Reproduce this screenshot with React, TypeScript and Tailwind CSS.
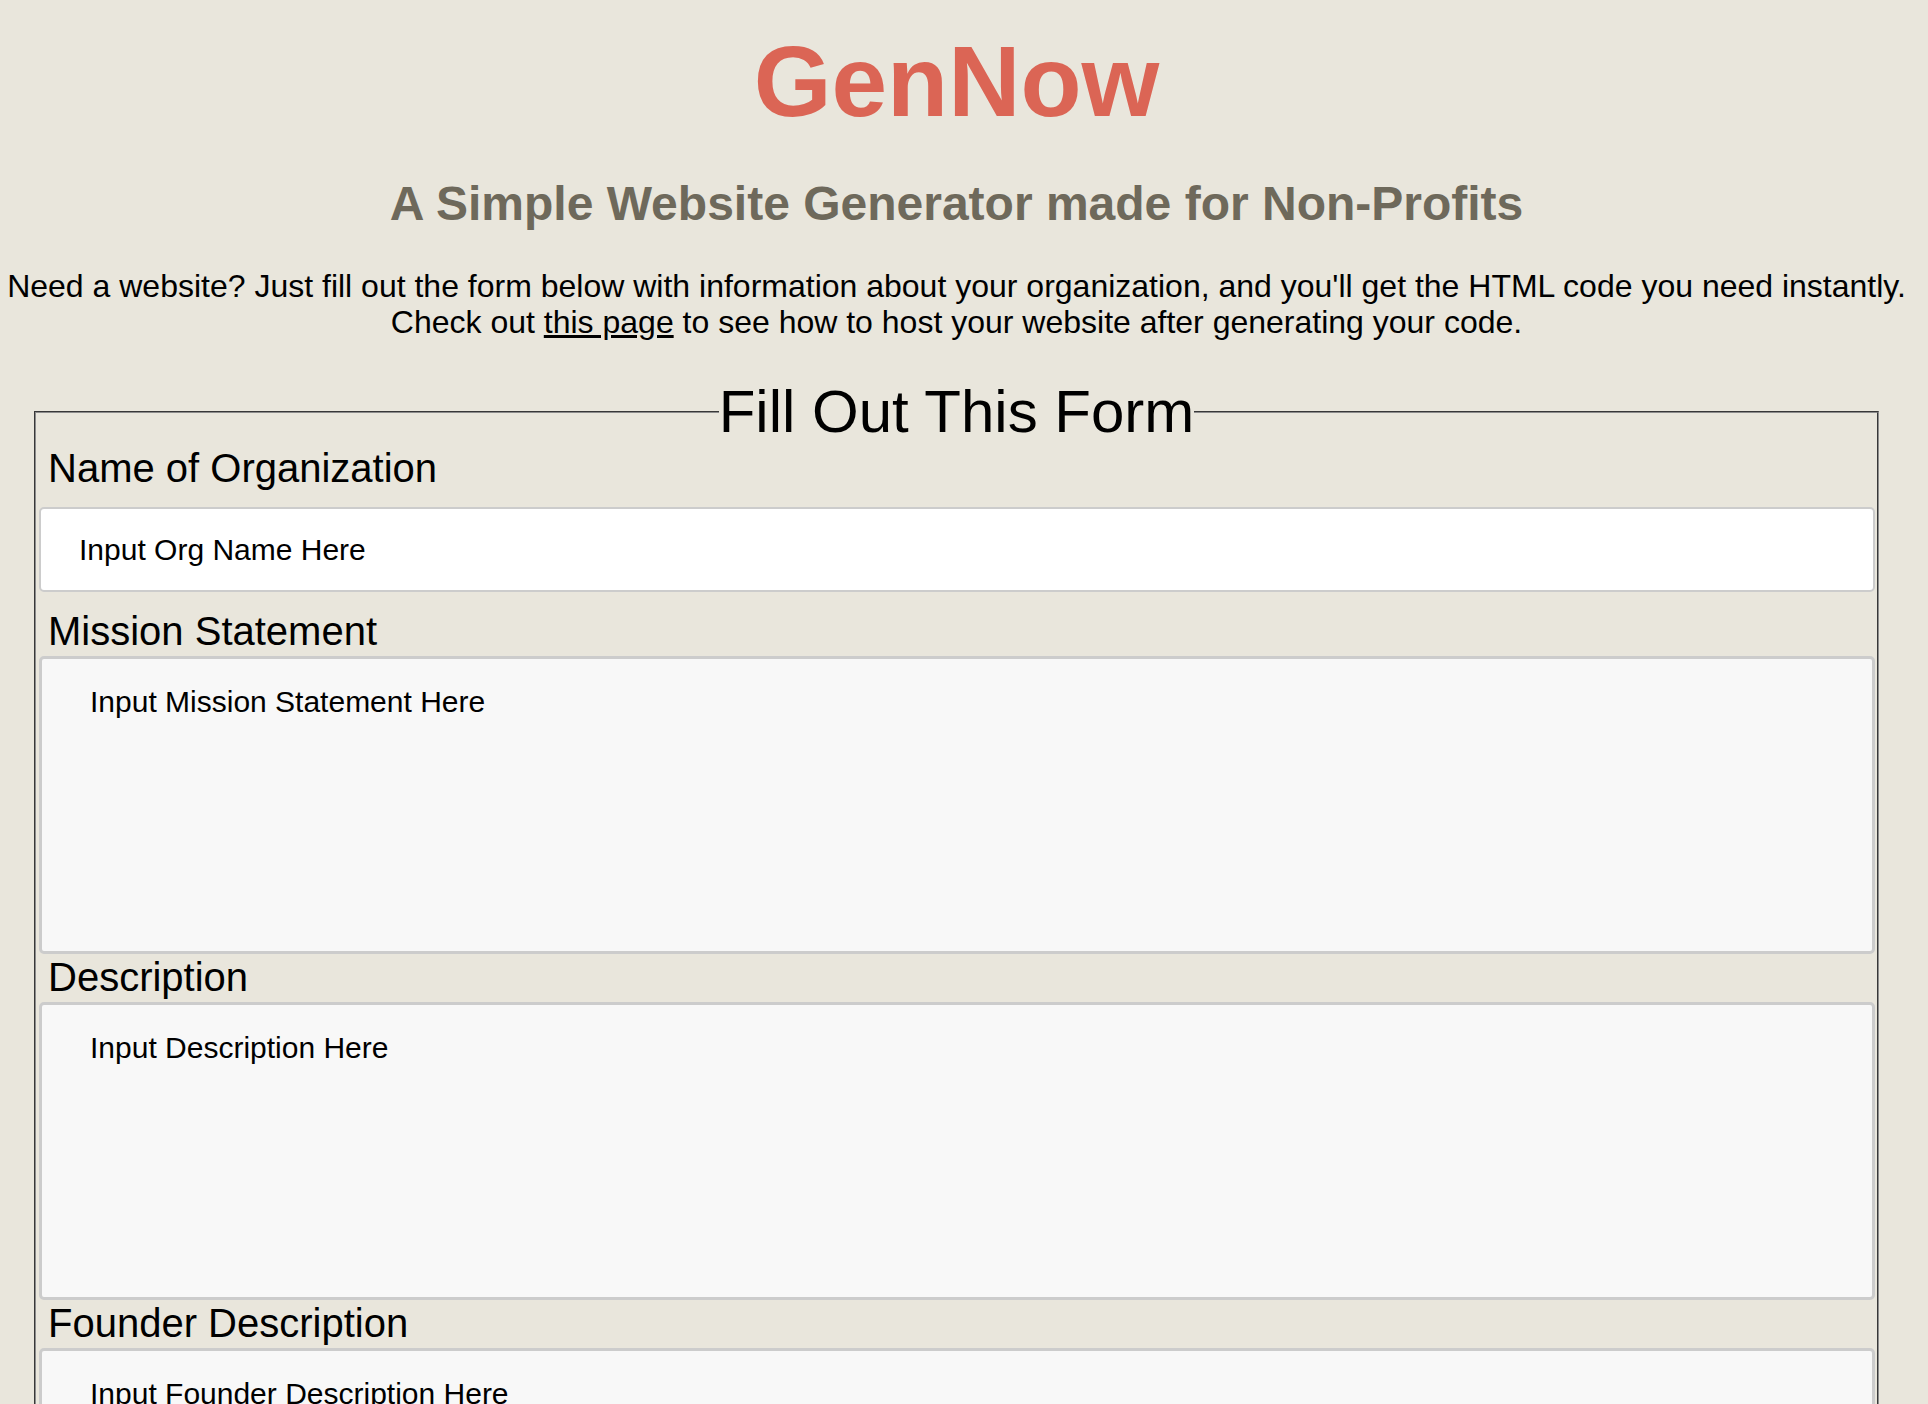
import React from "react"

const fields = [
  { label: "Mission Statement", placeholder: "Input Mission Statement Here" },
  { label: "Description", placeholder: "Input Description Here" },
  { label: "Founder Description", placeholder: "Input Founder Description Here" },
  { label: "Contact Information", placeholder: "Input Contact Information Here" },
]

export default function App() {
  return (
    <div className="h-screen overflow-hidden bg-[#e9e6dc] font-['Liberation_Sans',Arial,sans-serif] text-black">
      <div className="w-[1913px] pt-[24px]">
        <h1 className="text-center text-[100px] leading-[115px] font-bold text-[#db6555]">GenNow</h1>
        <h2 className="mt-[37px] text-center text-[48px] leading-[55px] font-bold text-[#6e695b]">
          A Simple Website Generator made for Non-Profits
        </h2>
        <p className="mt-[37px] text-center text-[32px] leading-[36px] whitespace-nowrap">
          Need a website? Just fill out the form below with information about your organization, and you'll get the HTML code you need instantly.
          <br />
          Check out{" "}
          <a href="#" className="underline">
            this page
          </a>{" "}
          to see how to host your website after generating your code.
        </p>

        <form className="mt-[37px]">
          <fieldset className="mx-[34px] [border:2px_groove_#8c8c8c]">
            <legend {...{ align: "center" }} className="mx-auto px-0 text-[60px] leading-[69px]">
              Fill Out This Form
            </legend>

            <label className="-mt-px block pl-[12px] text-[40px] leading-[46px] mb-[2px]">Name of Organization</label>
            <input
              type="text"
              placeholder="Input Org Name Here"
              className="mt-[16px] mb-4 ml-[3px] block h-[85px] w-[calc(100%-5px)] rounded-[5px] border-2 border-[#cccccc] bg-white px-[38px] text-[30px] outline-none placeholder:text-black"
            />

            {fields.map((f) => (
              <div key={f.label}>
                <label className="block pl-[12px] text-[40px] leading-[46px] mb-[2px]">{f.label}</label>
                <textarea
                  placeholder={f.placeholder}
                  className="ml-[3px] block h-[298px] w-[calc(100%-5px)] resize-none rounded-[5px] border-[3px] border-[#cccccc] bg-[#f8f8f8] px-[48px] pt-[26px] text-[30px] leading-[34px] outline-none placeholder:text-black"
                />
              </div>
            ))}
          </fieldset>
        </form>
      </div>
    </div>
  )
}
